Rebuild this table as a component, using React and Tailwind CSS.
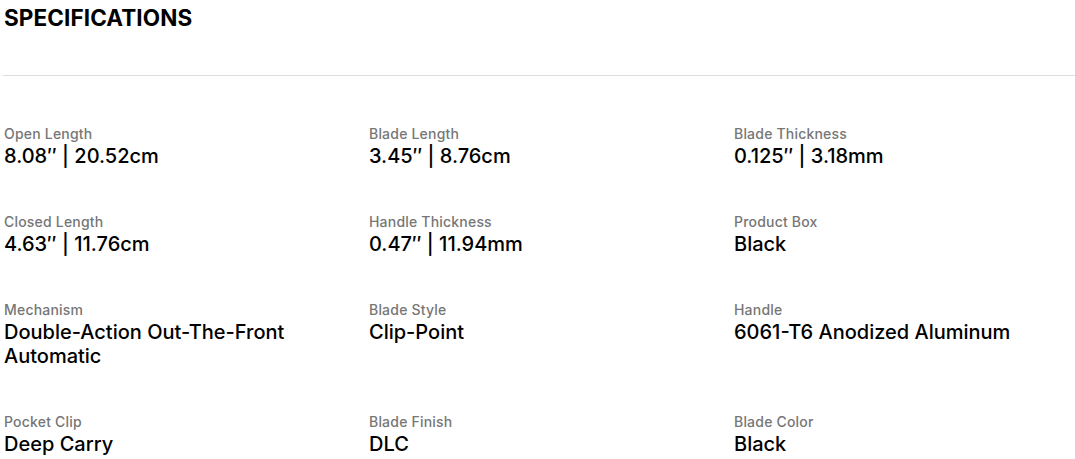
const specs = [
  { label: "Open Length", value: "8.08″ | 20.52cm" },
  { label: "Blade Length", value: "3.45″ | 8.76cm" },
  { label: "Blade Thickness", value: "0.125″ | 3.18mm" },
  { label: "Closed Length", value: "4.63″ | 11.76cm" },
  { label: "Handle Thickness", value: "0.47″ | 11.94mm" },
  { label: "Product Box", value: "Black" },
  { label: "Mechanism", value: "Double-Action Out-The-Front Automatic" },
  { label: "Blade Style", value: "Clip-Point" },
  { label: "Handle", value: "6061-T6 Anodized Aluminum" },
  { label: "Pocket Clip", value: "Deep Carry" },
  { label: "Blade Finish", value: "DLC" },
  { label: "Blade Color", value: "Black" },
];

export default function App() {
  return (
    <div className="bg-white pl-[4px] text-black" style={{ fontFamily: "Inter, 'Liberation Sans', sans-serif" }}>
      <h2 className="text-[22.5px] font-bold leading-[36px] tracking-[0.1px]">SPECIFICATIONS</h2>
      <div className="mt-[39px] ml-[-1px] border-t border-[#dddddd]" />
      <div className="grid grid-cols-[345px_345px_345px] gap-x-[20px] gap-y-[44px] pt-[48px]">
        {specs.map((s) => (
          <div key={s.label}>
            <div className="text-[14px] font-medium leading-[20px] tracking-[0.2px] text-[#767676]">{s.label}</div>
            <div className="text-[20px] font-medium leading-[24px]">{s.value}</div>
          </div>
        ))}
      </div>
    </div>
  );
}
